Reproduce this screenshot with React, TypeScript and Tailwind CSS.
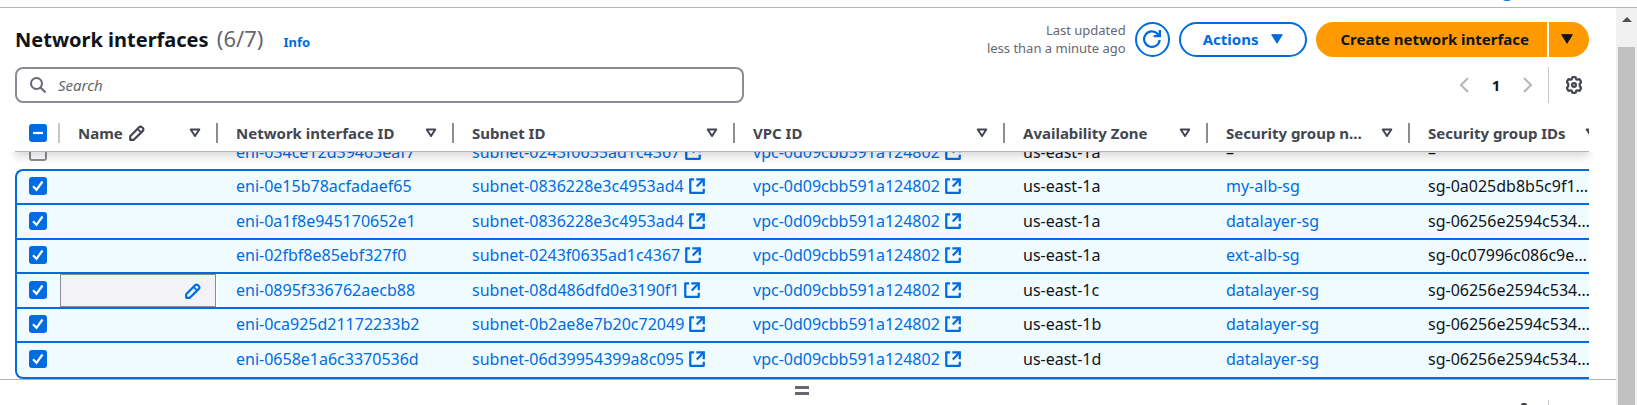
import { useLayoutEffect, useRef } from "react";
import type { ReactNode } from "react";

type Eni = {
  id: string;
  subnet: string;
  zone: string;
  group: string;
  groupId: string;
  selected: boolean;
  editing?: boolean;
};

const VPC = "vpc-0d09cbb591a124802";

const ROWS: Eni[] = [
  { id: "eni-034ce12d39403eaf7", subnet: "subnet-0243f0635ad1c4367", zone: "us-east-1a", group: "–", groupId: "–", selected: false },
  { id: "eni-0e15b78acfadaef65", subnet: "subnet-0836228e3c4953ad4", zone: "us-east-1a", group: "my-alb-sg", groupId: "sg-0a025db8b5c9f1…", selected: true },
  { id: "eni-0a1f8e945170652e1", subnet: "subnet-0836228e3c4953ad4", zone: "us-east-1a", group: "datalayer-sg", groupId: "sg-06256e2594c534…", selected: true },
  { id: "eni-02fbf8e85ebf327f0", subnet: "subnet-0243f0635ad1c4367", zone: "us-east-1a", group: "ext-alb-sg", groupId: "sg-0c07996c086c9e…", selected: true },
  { id: "eni-0895f336762aecb88", subnet: "subnet-08d486dfd0e3190f1", zone: "us-east-1c", group: "datalayer-sg", groupId: "sg-06256e2594c534…", selected: true, editing: true },
  { id: "eni-0ca925d21172233b2", subnet: "subnet-0b2ae8e7b20c72049", zone: "us-east-1b", group: "datalayer-sg", groupId: "sg-06256e2594c534…", selected: true },
  { id: "eni-0658e1a6c3370536d", subnet: "subnet-06d39954399a8c095", zone: "us-east-1d", group: "datalayer-sg", groupId: "sg-06256e2594c534…", selected: true },
];

const COLUMNS = [
  "Name",
  "Network interface ID",
  "Subnet ID",
  "VPC ID",
  "Availability Zone",
  "Security group n…",
  "Security group IDs",
];

function Icon({ className, children }: { className: string; children: ReactNode }) {
  return (
    <svg viewBox="0 0 16 16" fill="none" stroke="currentColor" strokeWidth="2" className={className} aria-hidden="true">
      {children}
    </svg>
  );
}

function PencilIcon({ className }: { className: string }) {
  return (
    <Icon className={className}>
      <path strokeLinejoin="round" strokeWidth="2.2" d="M1.200 14.800v-3.600l8.900-9a2 2 0 0 1 2.900 0l.8.800a2 2 0 0 1 0 2.900l-9 8.900H1.200Z" />
      <path strokeWidth="1.8" d="m8.800 4.200 3 3" />
    </Icon>
  );
}

function ExternalIcon() {
  return (
    <Icon className="size-[18px] shrink-0">
      <path d="M7.400 2H14v6.200" />
      <path d="M7.800 8.400 14 2" />
      <path strokeLinejoin="round" d="M14 10.500V14H2V2h3.400" />
    </Icon>
  );
}

function GearIcon({ className }: { className: string }) {
  return (
    <Icon className={className}>
      <path
        strokeLinejoin="round"
        d="M6.200 1.900Q6.300 1 7.200 1h1.600q.9 0 1 .9l.2.900q.9.500 1 .5l1.100-.4q.8-.2 1.200.5l.8 1.400q.4.800-.2 1.300l-.8.800v2.200l.8.800q.6.500.2 1.300l-.8 1.400q-.4.700-1.200.5L11 12.700l-1 .5-.2.900q-.1.900-1 .9H7.200q-.9 0-1-.9l-.2-.9-1-.5-1.100.400q-.8.200-1.200-.5l-.8-1.400q-.4-.8.200-1.300l.8-.8V6.900l-.8-.8q-.6-.5-.2-1.300l.8-1.400q.4-.7 1.200-.5L5 3.300l1-.5.2-.9Z"
      />
      <circle cx="8" cy="8" r="1.700" />
    </Icon>
  );
}

function SortIcon() {
  return (
    <svg viewBox="0 0 12 10" className="h-[10px] w-3 shrink-0" fill="none" stroke="currentColor" strokeWidth="2" strokeLinejoin="round" aria-hidden="true">
      <path d="M1.700 1.500h8.600L6 8 1.700 1.500Z" />
    </svg>
  );
}

function CaretIcon() {
  return (
    <svg viewBox="0 0 12 10" className="h-[10px] w-3 shrink-0" fill="currentColor" stroke="currentColor" strokeLinejoin="round" aria-hidden="true">
      <path d="M.7.700h10.600L6 9.200.7.700Z" />
    </svg>
  );
}

function Check({ state, label }: { state: "on" | "off" | "mixed"; label: string }) {
  return (
    <label className="relative block size-[18px]">
      <input
        type="checkbox"
        aria-label={label}
        defaultChecked={state === "on"}
        className={
          state === "off"
            ? "block size-[18px] appearance-none rounded-[3px] border-2 border-[#8c8c94] bg-white"
            : "block size-[18px] appearance-none rounded-[3px] bg-[#006ce0]"
        }
      />
      {state !== "off" && (
        <svg viewBox="0 0 18 18" className="pointer-events-none absolute inset-0 size-[18px]" fill="none" stroke="#fff" strokeWidth="2.200" aria-hidden="true">
          <path d={state === "on" ? "M4 9.300l3.500 3.500L13.500 4.500" : "M4 9h10"} />
        </svg>
      )}
    </label>
  );
}

function ResourceLink({ text, external }: { text: string; external?: boolean }) {
  return (
    <a href="#" className="flex items-center gap-1 whitespace-nowrap text-[#006ce0]">
      {text}
      {external && <ExternalIcon />}
    </a>
  );
}

function Row({ row, first, last }: { row: Eni; first: boolean; last: boolean }) {
  const cell = row.selected
    ? "overflow-hidden whitespace-nowrap border-t-2 border-[#006ce0] bg-[#f0fbff] p-0 pb-[2px] pl-[18px] group-last:border-b-2"
    : "overflow-hidden whitespace-nowrap p-0 pl-[18px]";
  const edge = row.selected
    ? first
      ? "rounded-tl-lg border-t-2 border-l-2 border-[#006ce0] bg-[#f0fbff] p-0 pb-[2px] pl-3"
      : "border-t-2 border-l-2 border-[#006ce0] bg-[#f0fbff] p-0 pb-[2px] pl-3 group-last:rounded-bl-lg group-last:border-b-2"
    : "p-0 pl-[14px]";
  return (
    <tr className={last ? "group h-[38px]" : "group odd:h-[35px] even:h-[34px]"}>
      <td className={edge}>
        <Check state={row.selected ? "on" : "off"} label={"Select " + row.id} />
      </td>
      {row.editing ? (
        <td className="h-px border-t-2 border-[#006ce0] bg-white p-0 pr-[2px]">
          <button
            type="button"
            aria-label="Edit name"
            className="flex h-full w-full items-center justify-end border border-[#8c8c94] bg-[#f3f3f7] pr-[14px] text-[#006ce0]"
          >
            <PencilIcon className="size-4" />
          </button>
        </td>
      ) : (
        <td className={cell} />
      )}
      <td className={cell}>
        <ResourceLink text={row.id} />
      </td>
      <td className={cell}>
        <ResourceLink text={row.subnet} external />
      </td>
      <td className={cell}>
        <ResourceLink text={VPC} external />
      </td>
      <td className={cell}>{row.zone}</td>
      <td className={cell}>{row.selected ? <ResourceLink text={row.group} /> : row.group}</td>
      <td className={cell}>{row.groupId}</td>
    </tr>
  );
}

export default function App() {
  const scroller = useRef<HTMLDivElement>(null);

  useLayoutEffect(() => {
    const el = scroller.current;
    if (el) el.scrollTop = el.scrollHeight;
  }, []);

  return (
    <div className="flex h-screen flex-col overflow-hidden bg-white font-['Noto_Sans','Open_Sans',sans-serif] text-[15px] leading-5 text-[#0f141a]">
      <div className="flex h-2 shrink-0 items-start justify-end overflow-hidden border-b border-[#b4b4bb] pr-[121px]">
        <span className="-mt-[17px] size-[18px] shrink-0 rounded-full bg-[#006ce0]" />
      </div>

      <div className="flex min-h-0 flex-1">
        <main className="flex min-w-0 flex-1 flex-col">
          <header className="flex items-center justify-between pt-[13px] pr-[27px] pl-[15px]">
            <div className="flex items-baseline">
              <h1 className="text-xl leading-6 font-bold">
                Network interfaces{" "}
                <span className="ml-[3px] text-[22px] font-normal text-[#656871]">(6/7)</span>
              </h1>
              <a href="#" className="ml-5 text-[13px] font-bold text-[#006ce0]">
                Info
              </a>
            </div>
            <div className="flex items-center gap-[9px] font-bold">
              <p className="text-right text-[13px] leading-[18px] font-normal text-[#656871]">
                Last updated
                <br />
                less than a minute ago
              </p>
              <button type="button" aria-label="Refresh" className="flex size-[35px] items-center justify-center rounded-full border-2 border-[#006ce0] text-[#006ce0]">
                <Icon className="size-[18px]">
                  <path d="M14.800 8.700A6.900 6.900 0 1 1 12.800 3.200l2 2" />
                  <path d="M15 0v5.500H9.500" />
                </Icon>
              </button>
              <button type="button" className="flex h-[35px] items-center gap-[13px] rounded-full border-2 border-[#006ce0] px-[22px] text-[#006ce0]">
                Actions
                <CaretIcon />
              </button>
              <div className="flex gap-[2px]">
                <button type="button" className="h-[35px] rounded-l-full bg-[#ff9900] pr-[18px] pl-[24px]">
                  Create network interface
                </button>
                <button type="button" aria-label="More create options" className="flex h-[35px] w-10 items-center rounded-r-full bg-[#ff9900] pl-3">
                  <CaretIcon />
                </button>
              </div>
            </div>
          </header>

          <div className="flex items-center justify-between pt-[10px] pr-[27px] pl-[15px]">
            <label className="flex h-9 w-[46.300%] items-center gap-3 rounded-lg border-2 border-[#8c8c94] pl-[13px] text-[#656871]">
              <Icon className="size-4 shrink-0">
                <circle cx="6.500" cy="6.500" r="5.500" />
                <path d="m10.500 10.500 5 5" />
              </Icon>
              <input type="search" aria-label="Search" placeholder="Search" className="min-w-0 flex-1 outline-none placeholder:text-[#656871] placeholder:italic" />
            </label>
            <div className="flex h-9 items-center">
              <button type="button" aria-label="Previous page" className="text-[#b4b4bb]">
                <svg viewBox="0 0 10 16" className="h-4 w-[10px]" fill="none" stroke="currentColor" strokeWidth="2" aria-hidden="true">
                  <path d="M9 1 2 8l7 7" />
                </svg>
              </button>
              <button type="button" className="w-[54px] text-center font-bold">
                1
              </button>
              <button type="button" aria-label="Next page" className="text-[#b4b4bb]">
                <svg viewBox="0 0 10 16" className="h-4 w-[10px]" fill="none" stroke="currentColor" strokeWidth="2" aria-hidden="true">
                  <path d="m1 1 7 7-7 7" />
                </svg>
              </button>
              <button type="button" aria-label="Preferences" className="ml-[15px] flex h-9 items-center border-l border-[#c6c6cd] pr-[6px] pl-4 text-[#424650]">
                <GearIcon className="size-[18px]" />
              </button>
            </div>
          </div>

          <div ref={scroller} className="min-h-0 flex-1 overflow-hidden pr-[27px] pl-[15px]">
            <table className="w-full table-fixed border-separate border-spacing-0">
              <colgroup>
                <col className="w-[45px]" />
                <col className="w-[158px]" />
                <col className="w-[236px]" />
                <col className="w-[281px]" />
                <col className="w-[270px]" />
                <col className="w-[203px]" />
                <col className="w-[202px]" />
                <col />
              </colgroup>
              <thead className="sticky top-0 z-10 bg-white text-left text-[#424650] shadow-[0_5px_8px_rgba(0,7,22,0.14)] [clip-path:polygon(0_0,100%_0,100%_100%,calc(100%+12px)_100%,calc(100%+12px)_140%,-12px_140%,-12px_100%,0_100%)]">
                <tr className="h-[49px]">
                  <th className="border-b border-[#b4b4bb] bg-white p-0 pt-[12px]">
                    <div className="flex h-5 items-center justify-between border-r-2 border-[#c6c6cd] pl-[14px]">
                      <Check state="mixed" label="Select all" />
                    </div>
                  </th>
                  {COLUMNS.map((name, i) => (
                    <th key={name} scope="col" className="overflow-hidden border-b border-[#b4b4bb] bg-white p-0 pt-[12px] font-bold whitespace-nowrap">
                      <div
                        className={
                          i === COLUMNS.length - 1
                            ? "flex h-5 w-[202px] items-center justify-between pr-[15px] pl-[18px]"
                            : "flex h-5 items-center justify-between border-r-2 border-[#8c8c94] pr-[15px] pl-[18px]"
                        }
                      >
                        <span className="flex items-center gap-[6px]">
                          {name}
                          {i === 0 && <PencilIcon className="size-4 shrink-0" />}
                        </span>
                        <SortIcon />
                      </div>
                    </th>
                  ))}
                </tr>
              </thead>
              <tbody className="text-base leading-5">
                {ROWS.map((row, i) => (
                  <Row key={row.id} row={row} first={i === 1} last={i === ROWS.length - 1} />
                ))}
              </tbody>
            </table>
          </div>

          <footer className="flex h-[26px] shrink-0 overflow-hidden border-t border-[#b4b4bb]">
            <div className="flex flex-1 justify-center pt-[6px] pl-[88px]">
              <button type="button" aria-label="Resize panel" className="flex h-[9px] w-[14px] flex-col justify-between">
                <span className="block h-[3px] w-full bg-[#656871]" />
                <span className="block h-[3px] w-full bg-[#656871]" />
              </button>
            </div>
            <div className="flex items-start pt-5 pr-[67px] text-[#424650]">
              <GearIcon className="mt-[3px] mr-[15px] size-[18px]" />
              <span className="h-9 w-px bg-[#c6c6cd]" />
            </div>
          </footer>
        </main>

        <aside className="flex w-[21px] shrink-0 flex-col items-center bg-[#f1f1f1]">
          <svg viewBox="0 0 10 5" className="mt-[9px] mb-[25px] h-[5px] w-[10px]" fill="#505050" aria-hidden="true">
            <path d="M0 5 5 0l5 5Z" />
          </svg>
          <div className="w-[17px] flex-1 bg-[#c1c1c1]" />
        </aside>
      </div>
    </div>
  );
}
